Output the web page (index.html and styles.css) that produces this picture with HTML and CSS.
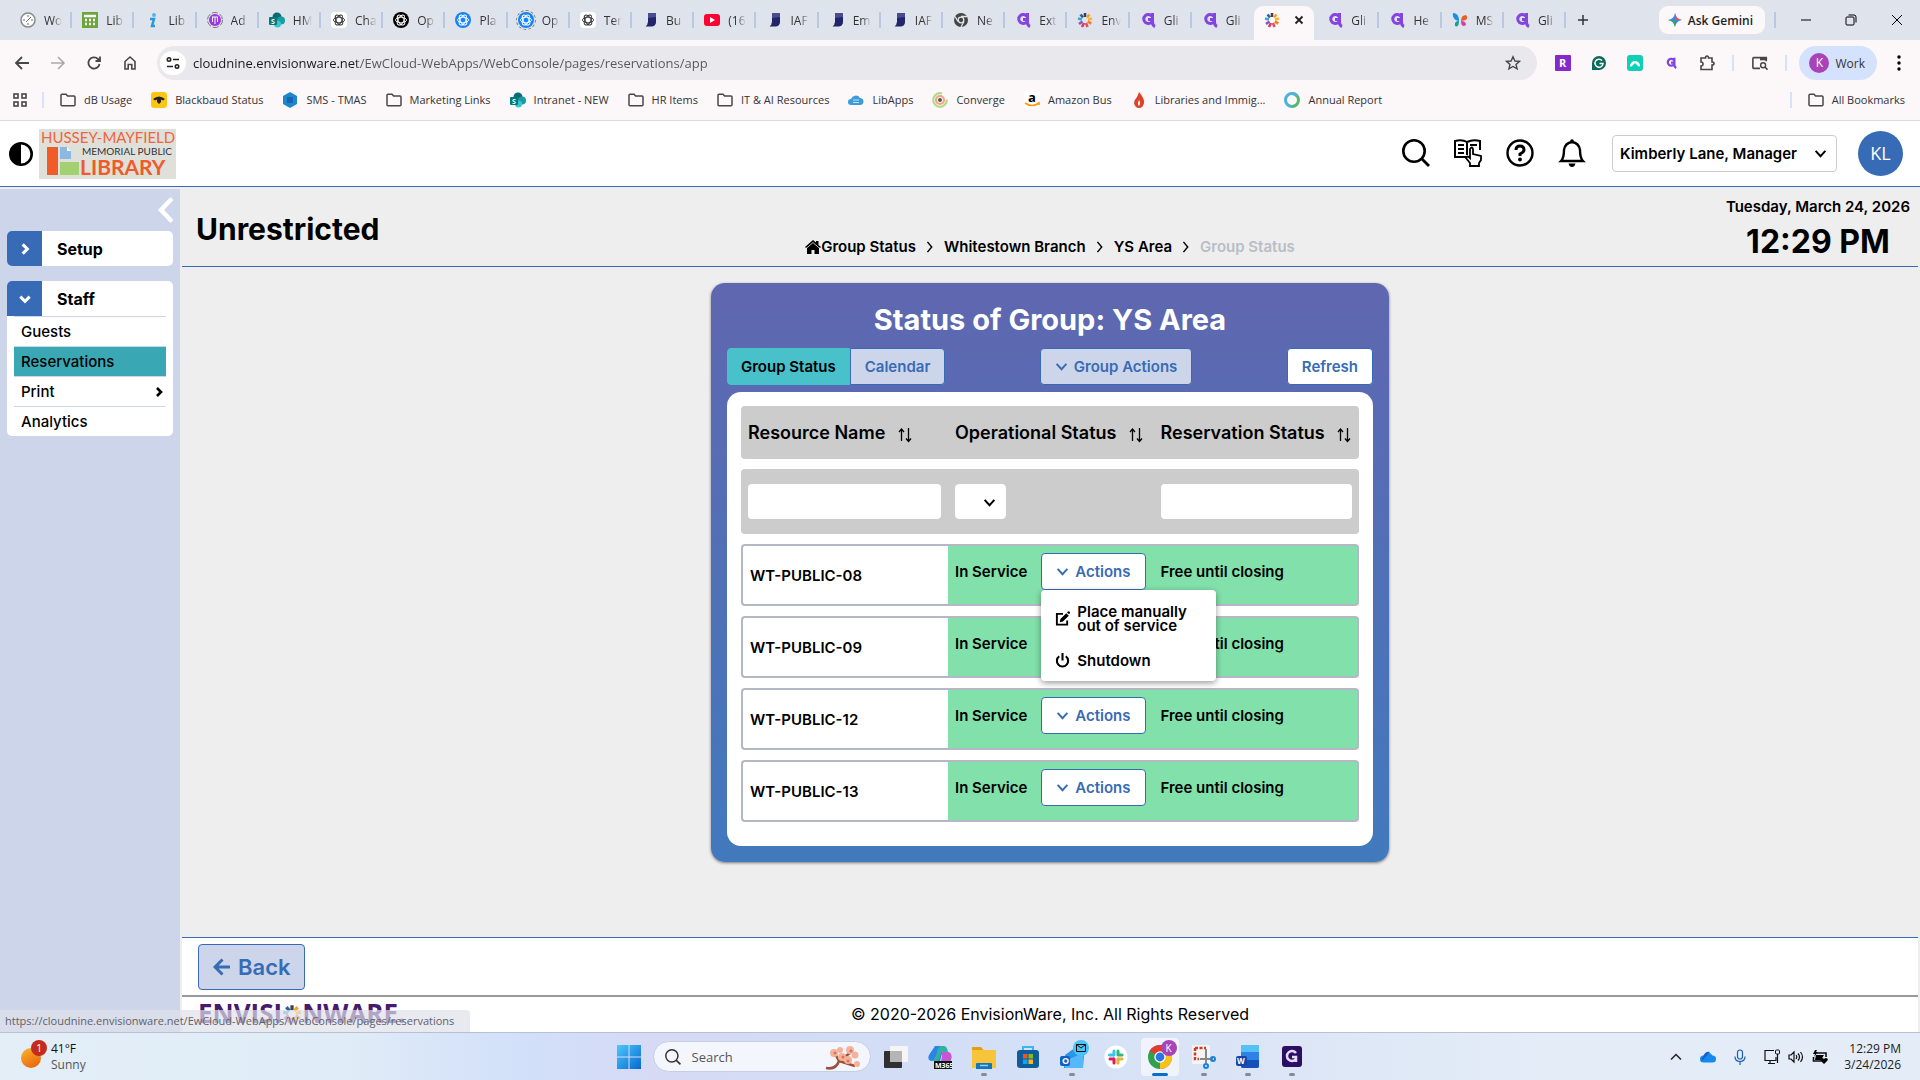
FILE: index.html
```html
<!DOCTYPE html>
<html lang="en">
<head>
    <meta charset="UTF-8">
    <meta name="viewport" content="width=device-width, initial-scale=1.0">
    <title>Group Status</title>
    <link rel="stylesheet" href="styles.css">
</head>
<body>
    <!-- Shared icons -->
    <svg class="sprite" aria-hidden="true">
        <symbol id="folder" viewBox="0 0 16 16"><path d="M1 3.2q0-1 1-1h4l1.6 1.8H14q1 0 1 1v7.8q0 1-1 1H2q-1 0-1-1z" fill="none" stroke="#474747" stroke-width="1.5"/></symbol>
        <symbol id="chevron" viewBox="0 0 12 12"><path d="M1.500 3.500 6 8.500l4.500-5" fill="none" stroke="currentColor" stroke-width="1.800"/></symbol>
        <symbol id="angle" viewBox="0 0 12 12"><path d="M4 2l4 4-4 4" fill="none" stroke="currentColor" stroke-width="2.600"/></symbol>
        <symbol id="sort" viewBox="0 0 14 16"><path d="M3.500 14V2M1 5l2.500-3L6 5M10.500 1v13M8 11.500l2.500 3 2.500-3" fill="none" stroke="#000" stroke-width="1.300"/></symbol>
        <symbol id="g-icon" viewBox="0 0 16 16"><path d="M12 4.500A4.500 4.500 0 1 0 12 9.500V7.500H8M12.500 1v9q0 3.500 2.500 4.500" fill="none" stroke="#8344e0" stroke-width="3"/></symbol>
        <symbol id="book-icon" viewBox="0 0 16 16"><path d="M6 1h8v8q0 5-4 5H4q2-1 2-4z" fill="#4a4c92"/><path d="M6 6l8-1v4q0 5-4 5.500H3.500Q6 13 6 10z" fill="#22256a"/></symbol>
        <symbol id="gpt-icon" viewBox="0 0 16 16"><g fill="none" stroke="currentColor" stroke-width="0.900"><ellipse cx="8" cy="8" rx="5.500" ry="2.800"/><ellipse cx="8" cy="8" rx="5.500" ry="2.800" transform="rotate(60 8 8)"/><ellipse cx="8" cy="8" rx="5.500" ry="2.800" transform="rotate(120 8 8)"/></g></symbol>
        <symbol id="sharepoint" viewBox="0 0 16 16"><circle cx="8" cy="5" r="4.500" fill="#036c70"/><circle cx="12" cy="8.500" r="4" fill="#1a9ba1"/><circle cx="8.500" cy="12" r="3.500" fill="#37c6d0"/><rect y="5" width="8" height="8" rx="1" fill="#03787c"/><text x="2" y="11.500" font-size="7" font-weight="700" fill="#fff">S</text></symbol>
        <symbol id="burst" viewBox="0 0 16 16"><g fill="none" stroke-width="2.600"><path d="M8 5V1" stroke="#443a5e"/><path d="M10 5.500l2.500-3" stroke="#f5a31c"/><path d="M11 7.500l4-1" stroke="#f7b733"/><path d="M10.800 9.500l3.500 2" stroke="#f08030"/><path d="M9 11l1.500 4" stroke="#e84e4e"/><path d="M7 11l-2 4" stroke="#d43a78"/><path d="M5.500 9.500L2 12" stroke="#8f52b5"/><path d="M5 7.500L1 6.500" stroke="#3ba5d6"/><path d="M6 5.500L3.500 2.500" stroke="#28658e"/></g></symbol>
        <symbol id="search" viewBox="0 0 28 28"><circle cx="12" cy="12" r="10.700" fill="none" stroke="currentColor" stroke-width="2.600"/><path d="M19.500 19.500l7.500 7.500" stroke="currentColor" stroke-width="2.800"/></symbol>
    </svg>

    <!-- Browser window -->
    <header class="browser">
        <div class="tab-strip">
            <nav class="tabs">
                <button class="tab"><svg viewBox="0 0 16 16"><circle cx="8" cy="8" r="7" fill="#fff" stroke="#888" stroke-width="1.500"/><path d="M8 3v2M8 13v-2M3 8h2M13 8h-2M6 10l5-5" stroke="#666"/></svg><span>Wo</span></button>
                <button class="tab"><svg viewBox="0 0 16 16"><rect width="16" height="16" fill="#6aa63b"/><path d="M2 4h12M3 8h2m2 0h2m2 0h2M3 12h2m2 0h2m2 0h2" stroke="#fff" stroke-width="2.500"/></svg><span>Lib</span></button>
                <button class="tab"><svg viewBox="0 0 16 16"><circle cx="10" cy="3" r="2" fill="#55b7e8"/><path d="M6 7h4l-2 7h3" fill="none" stroke="#269bdb" stroke-width="2.500"/></svg><span>Lib</span></button>
                <button class="tab"><svg viewBox="0 0 16 16"><circle cx="8" cy="8" r="7.500" fill="none" stroke="#777" stroke-dasharray="6 2"/><circle cx="8" cy="8" r="6" fill="#9d35e0"/><path d="M5 5h6M8 5v7M5.500 5v5M10.500 5v5" stroke="#fff"/></svg><span>Ad</span></button>
                <button class="tab"><svg><use href="#sharepoint"/></svg><span>HM</span></button>
                <button class="tab"><svg class="gpt gpt-white"><use href="#gpt-icon"/></svg><span>Cha</span></button>
                <button class="tab"><svg class="gpt gpt-black"><use href="#gpt-icon"/></svg><span>Op</span></button>
                <button class="tab"><svg class="gpt gpt-blue"><use href="#gpt-icon"/></svg><span>Pla</span></button>
                <button class="tab"><svg class="gpt gpt-blue gpt-ring"><use href="#gpt-icon"/></svg><span>Op</span></button>
                <button class="tab"><svg class="gpt gpt-white"><use href="#gpt-icon"/></svg><span>Ter</span></button>
                <button class="tab"><svg><use href="#book-icon"/></svg><span>Bu</span></button>
                <button class="tab"><svg viewBox="0 0 16 16"><rect y="2" width="16" height="12" rx="3" fill="#f03"/><path d="M6 5l5 3-5 3z" fill="#fff"/></svg><span>(16</span></button>
                <button class="tab"><svg><use href="#book-icon"/></svg><span>IAF</span></button>
                <button class="tab"><svg><use href="#book-icon"/></svg><span>Em</span></button>
                <button class="tab"><svg><use href="#book-icon"/></svg><span>IAF</span></button>
                <button class="tab"><svg viewBox="0 0 16 16"><circle cx="8" cy="8" r="7" fill="#444"/><circle cx="8" cy="8" r="2.800" fill="#444" stroke="#dfe3ec" stroke-width="1.300"/><path d="M8 4.500h6.500M5 9.500L2 4.500M11 9.500l-3 5.500" stroke="#dfe3ec" stroke-width="1.300"/></svg><span>Ne</span></button>
                <button class="tab"><svg><use href="#g-icon"/></svg><span>Ext</span></button>
                <button class="tab"><svg><use href="#burst"/></svg><span>Env</span></button>
                <button class="tab"><svg><use href="#g-icon"/></svg><span>Gli</span></button>
                <button class="tab"><svg><use href="#g-icon"/></svg><span>Gli</span></button>
                <button class="tab active" aria-label="Group Status"><svg><use href="#burst"/></svg><svg class="close" viewBox="0 0 10 10"><path d="M1.500 1.500l7 7M8.500 1.500l-7 7" stroke="#1f1f1f" stroke-width="1.800"/></svg></button>
                <button class="tab"><svg><use href="#g-icon"/></svg><span>Gli</span></button>
                <button class="tab"><svg><use href="#g-icon"/></svg><span>He</span></button>
                <button class="tab"><svg viewBox="0 0 16 16"><path d="M7 9C3 9 0 5 1 1q6 0 6 8z" fill="#1691e8"/><path d="M7 9q-5 0-4 5 4 2 4-5z" fill="#1ba08a"/><path d="M9 9q0-6 5-6 4 5-5 6z" fill="#f05a28"/><path d="M9 9q5 0 5 4-5 3-5-4z" fill="#d83ca8"/></svg><span>MS</span></button>
                <button class="tab"><svg><use href="#g-icon"/></svg><span>Gli</span></button>
            </nav>
            <button class="new-tab" aria-label="New tab"><svg viewBox="0 0 12 12"><path d="M6 1v10M1 6h10" stroke="#333" stroke-width="1.500"/></svg></button>
            <div class="window-tools">
                <button class="gemini"><svg viewBox="0 0 14 14"><path d="M7 0q1 6 7 7-6 1-7 7-1-6-7-7 6-1 7-7z" fill="#3b82f6"/><path d="M7 0q1 6 7 7H7z" fill="#e8544a"/><path d="M0 7h7v7q-1-6-7-7z" fill="#35a566"/></svg>Ask Gemini</button>
                <button class="win-btn divided" aria-label="Minimize"><svg viewBox="0 0 12 12"><path d="M1 6h10" stroke="#000"/></svg></button>
                <button class="win-btn" aria-label="Restore"><svg viewBox="0 0 12 12"><rect x="1" y="3" width="8" height="8" rx="1" fill="none" stroke="#000"/><path d="M3.500 1H9q2 0 2 2v5.500" fill="none" stroke="#000"/></svg></button>
                <button class="win-btn" aria-label="Close"><svg viewBox="0 0 12 12"><path d="M1 1l10 10M11 1L1 11" stroke="#000"/></svg></button>
            </div>
        </div>

        <div class="toolbar">
            <div class="nav-buttons">
                <button aria-label="Back"><svg viewBox="0 0 16 16"><path d="M15 8H2.500M8 2L2 8l6 6" fill="none" stroke="#474747" stroke-width="1.800"/></svg></button>
                <button aria-label="Forward"><svg viewBox="0 0 16 16"><path d="M1 8h12.500M8 2l6 6-6 6" fill="none" stroke="#aaa" stroke-width="1.600"/></svg></button>
                <button aria-label="Reload"><svg viewBox="0 0 16 16"><path d="M13.500 9A5.600 5.600 0 1 1 12 4l2 2M14 1.500V6H9.500" fill="none" stroke="#474747" stroke-width="1.800"/></svg></button>
                <button aria-label="Home"><svg viewBox="0 0 16 16"><path d="M3 6.500L8 2l5 4.500V14H9.800V9.500H6.200V14H3z" fill="none" stroke="#474747" stroke-width="1.600"/></svg></button>
            </div>
            <div class="address">
                <button class="site-info" aria-label="Site information"><svg viewBox="0 0 14 14"><g fill="none" stroke="#222" stroke-width="1.600"><circle cx="3" cy="3.500" r="1.700"/><circle cx="11" cy="10.500" r="1.700"/><path d="M7 3.500h6M1 10.500h6"/></g></svg></button>
                <input type="text" class="url" aria-label="Address" value="cloudnine.envisionware.net/EwCloud-WebApps/WebConsole/pages/reservations/app">
                <button class="star" aria-label="Bookmark"><svg viewBox="0 0 16 16"><path d="M8 1.800l1.900 4.200 4.600.4-3.500 3 1.100 4.500L8 11.500l-4.100 2.400L5 9.400l-3.500-3L6.100 6z" fill="none" stroke="#474747" stroke-width="1.400"/></svg></button>
            </div>
            <div class="extensions">
                <button aria-label="R extension"><svg viewBox="0 0 16 16"><rect width="16" height="16" rx="1" fill="#8529cd"/><text x="4" y="12" font-size="11" font-weight="700" fill="#fff">R</text></svg></button>
                <button aria-label="Grammar"><svg viewBox="0 0 16 16"><path d="M1 15V8a7 7 0 1 1 7 7z" fill="#0b6b5a"/><path d="M11 5.500A4 4 0 1 0 12 8.500H8.500" fill="none" stroke="#fff" stroke-width="1.500"/></svg></button>
                <button aria-label="VPN"><svg viewBox="0 0 16 16"><rect width="16" height="16" rx="3" fill="#0fcfb6"/><path d="M3 11a5 5 0 1 1 10 0q-1 1-2 0L8 8l-3 3q-1 1-2 0z" fill="#fff"/></svg></button>
                <button aria-label="G extension"><svg class="small"><use href="#g-icon"/></svg></button>
                <button aria-label="Extensions"><svg viewBox="0 0 16 16"><path d="M2 3h4.500q0-2 1.500-2t1.500 2H13v4q2 0 2 1.500T13 10v4.500H2V11q2 0 2-2T2 7z" fill="none" stroke="#474747" stroke-width="1.600"/></svg></button>
                <button class="divided" aria-label="Side search"><svg viewBox="0 0 18 16"><path d="M9 14H2q-1 0-1-1V3q0-1 1-1h14v4" fill="none" stroke="#474747" stroke-width="1.800"/><path d="M9 2h8v3H9z" fill="#474747"/><circle cx="12.500" cy="10.500" r="2.800" fill="none" stroke="#474747" stroke-width="1.600"/><path d="M14.500 12.500l3 3" stroke="#474747" stroke-width="1.800"/></svg></button>
            </div>
            <button class="profile"><span>K</span>Work</button>
            <button class="dots" aria-label="Menu"><svg viewBox="0 0 4 16"><circle cx="2" cy="2" r="1.700"/><circle cx="2" cy="8" r="1.700"/><circle cx="2" cy="14" r="1.700"/></svg></button>
        </div>

        <nav class="bookmarks">
            <button class="apps" aria-label="Apps"><svg viewBox="0 0 14 14"><g fill="none" stroke="#474747" stroke-width="1.600"><rect x="1" y="1" width="4" height="4"/><rect x="9" y="1" width="4" height="4"/><rect x="1" y="9" width="4" height="4"/><rect x="9" y="9" width="4" height="4"/></g></svg></button>
            <a href="#"><svg><use href="#folder"/></svg>dB Usage</a>
            <a href="#"><svg viewBox="0 0 16 16"><rect width="16" height="16" rx="3" fill="#ffc515"/><path d="M2 7q6-5 12 0l-2 1.500-2-1V10l-2 2-2-2V7.500l-2 1z" fill="#222"/></svg>Blackbaud Status</a>
            <a href="#"><svg viewBox="0 0 16 16"><path d="M8 0l7 4v8l-7 4-7-4V4z" fill="#1d86cf"/><path d="M5 5h6v6H5z" fill="#1565b0"/></svg>SMS - TMAS</a>
            <a href="#"><svg><use href="#folder"/></svg>Marketing Links</a>
            <a href="#"><svg><use href="#sharepoint"/></svg>Intranet - NEW</a>
            <a href="#"><svg><use href="#folder"/></svg>HR Items</a>
            <a href="#"><svg><use href="#folder"/></svg>IT &amp; AI Resources</a>
            <a href="#"><svg viewBox="0 0 16 16"><path d="M3 13a3 3 0 0 1 0-6 5 5 0 0 1 9-1 3.600 3.600 0 0 1 1 7z" fill="#3c9bd8"/><path d="M5 8h6M5 10.500h6" stroke="#bfe1f5"/></svg>LibApps</a>
            <a href="#"><svg viewBox="0 0 16 16"><circle cx="8" cy="8" r="6.800" fill="none" stroke="#b5d98b" stroke-width="2.200" stroke-dasharray="34 8"/><circle cx="8" cy="8" r="4" fill="none" stroke="#f3a27e" stroke-width="2"/><circle cx="8" cy="8" r="2" fill="#555"/></svg>Converge</a>
            <a href="#"><svg viewBox="0 0 16 16"><rect width="16" height="16" fill="#fff"/><text x="4" y="10" font-size="13" font-weight="700">a</text><path d="M1 11q7 5 14 0v2" fill="none" stroke="#f90" stroke-width="1.600"/></svg>Amazon Bus</a>
            <a href="#"><svg viewBox="0 0 16 16"><path d="M8 0q6 7 5 11-1 5-5 5t-5-5q0-3 3-6 1-2 2-5z" fill="#dc4427"/><path d="M8 8q2 3 0 6-2-2 0-6z" fill="#fff"/></svg>Libraries and Immig...</a>
            <a href="#"><svg viewBox="0 0 16 16"><path d="M8 1.500a6.500 6.500 0 0 0 0 13" fill="none" stroke="#4db2de" stroke-width="3"/><path d="M8 1.500a6.500 6.500 0 0 1 0 13" fill="none" stroke="#54b86a" stroke-width="3"/><path d="M8 1.500a6.500 6.500 0 0 1 5 2.500" fill="none" stroke="#4db2de" stroke-width="3"/></svg>Annual Report</a>
            <a href="#" class="all-bookmarks"><svg><use href="#folder"/></svg>All Bookmarks</a>
        </nav>
    </header>

    <!-- Application header -->
    <header class="app-header">
        <button class="contrast" aria-label="Toggle contrast"><svg viewBox="0 0 24 24"><circle cx="12" cy="12" r="10.700" fill="#fff" stroke="#000" stroke-width="2.600"/><path d="M12 1a11 11 0 0 0 0 22z"/></svg></button>
        <div class="library-logo">
            <svg viewBox="0 0 137 50">
                <rect width="137" height="50" fill="#dfe0da"/>
                <text x="2" y="14" font-size="15" fill="#f0653a">HUSSEY-MAYFIELD</text>
                <text x="43" y="26" font-size="10" fill="#333">MEMORIAL PUBLIC</text>
                <text x="41" y="46" font-size="21" font-weight="700" fill="#f15a29">LIBRARY</text>
                <rect x="8" y="18" width="11" height="28" fill="#f15a29"/>
                <path d="M21 18h7l4 4v8H21z" fill="#8db8e2"/><path d="M28 18v4h4z" fill="#fff"/>
                <rect x="21" y="33" width="19" height="13" fill="#a3d071"/>
            </svg>
        </div>
        <div class="header-tools">
            <button aria-label="Search"><svg viewBox="0 0 28 28"><use href="#search"/></svg></button>
            <button aria-label="Guide"><svg viewBox="0 0 28 28"><g fill="none" stroke="#000" stroke-width="2"><path d="M15 18H1V2q7-2 12 1 6-3 13-1v9M13 3v13M4 6h6M4 10h6M4 14h6M16 6h7M16 10h2"/></g><path d="M16 24l-4-5q1-3 4 0V10q2-3 3 0v5l8 2v4l-2 3v3h-9z" fill="#fff" stroke="#000" stroke-width="1.800"/></svg></button>
            <button aria-label="Help"><svg viewBox="0 0 28 28"><circle cx="14" cy="14" r="12.500" fill="none" stroke="#000" stroke-width="2.400"/><path d="M10 11q0-4 4-4t4 4q0 2-4 4v2" fill="none" stroke="#000" stroke-width="3"/><circle cx="14" cy="20.500" r="1.900"/></svg></button>
            <button aria-label="Notifications"><svg viewBox="0 0 28 28"><path d="M3 22q3-3 3-11 1-7 8-8 7 1 8 8 0 8 3 11z" fill="none" stroke="#000" stroke-width="2.400"/><circle cx="14" cy="2" r="1.800"/><path d="M10.500 24.500h7q-1 3.500-3.500 3.500t-3.500-3.500z"/></svg></button>
        </div>
        <div class="select-box user-select">
            <select aria-label="User"><option>Kimberly Lane, Manager</option></select>
            <svg><use href="#chevron"/></svg>
        </div>
        <div class="avatar">KL</div>
    </header>

    <div class="app">
        <!-- Side menu -->
        <aside class="sidebar">
            <button class="collapse" aria-label="Collapse menu"><svg viewBox="0 0 16 26"><path d="M13.500 3L4 13l9.500 10" fill="none" stroke="#fff" stroke-width="4.500" stroke-linecap="round"/></svg></button>
            <div class="menu-group">
                <button class="menu-title"><span class="menu-icon"><svg><use href="#angle"/></svg></span>Setup</button>
            </div>
            <div class="menu-group">
                <button class="menu-title"><span class="menu-icon open"><svg><use href="#angle"/></svg></span>Staff</button>
                <ul class="menu-list">
                    <li><a href="#">Guests</a></li>
                    <li><a href="#" class="selected">Reservations</a></li>
                    <li><a href="#">Print<svg><use href="#angle"/></svg></a></li>
                    <li><a href="#">Analytics</a></li>
                </ul>
            </div>
        </aside>

        <main class="main">
            <div class="page-head">
                <h1>Unrestricted</h1>
                <nav class="breadcrumb">
                    <a href="#"><svg class="home" viewBox="0 0 16 14"><path d="M0 7l8-7 3 2.600V1h2.500v4L16 7l-1 1-1-.8V14H9.500v-4h-3v4H2V7.200L1 8z"/><path d="M1.500 8.200L8 2.600l6.500 5.600" fill="none" stroke="#eee" stroke-width="0.800"/></svg>Group Status</a>
                    <svg class="sep" viewBox="0 0 8 14"><path d="M1 1l5 6-5 6" fill="none" stroke="#000" stroke-width="1.700"/></svg>
                    <a href="#">Whitestown Branch</a>
                    <svg class="sep" viewBox="0 0 8 14"><path d="M1 1l5 6-5 6" fill="none" stroke="#000" stroke-width="1.700"/></svg>
                    <a href="#">YS Area</a>
                    <svg class="sep" viewBox="0 0 8 14"><path d="M1 1l5 6-5 6" fill="none" stroke="#000" stroke-width="1.700"/></svg>
                    <span>Group Status</span>
                </nav>
                <div class="clock">
                    <div class="date">Tuesday, March 24, 2026</div>
                    <div class="time">12:29 PM</div>
                </div>
            </div>

            <div class="content">
                <section class="card">
                    <h2>Status of Group: YS Area</h2>
                    <div class="card-tools">
                        <div class="switch">
                            <button class="btn btn-on">Group Status</button>
                            <button class="btn btn-light">Calendar</button>
                        </div>
                        <button class="btn btn-light"><svg><use href="#chevron"/></svg>Group Actions</button>
                        <button class="btn btn-white">Refresh</button>
                    </div>
                    <div class="table-box">
                        <table class="status-table">
                            <thead>
                                <tr class="head-row">
                                    <th>Resource Name <svg><use href="#sort"/></svg></th>
                                    <th>Operational Status <svg><use href="#sort"/></svg></th>
                                    <th>Reservation Status <svg><use href="#sort"/></svg></th>
                                </tr>
                                <tr class="filter-row">
                                    <td><input type="text" aria-label="Resource name"></td>
                                    <td>
                                        <div class="select-box filter-select">
                                            <select aria-label="Operational status"><option></option></select>
                                            <svg><use href="#chevron"/></svg>
                                        </div>
                                    </td>
                                    <td><input type="text" aria-label="Reservation status"></td>
                                </tr>
                            </thead>
                            <tbody>
                                <tr>
                                    <td>WT-PUBLIC-08</td>
                                    <td>
                                        <div class="status">In Service
                                            <div class="dropdown">
                                                <button class="btn btn-white"><svg><use href="#chevron"/></svg>Actions</button>
                                                <div class="dropdown-menu">
                                                    <button><svg viewBox="0 0 16 16"><path d="M8.500 3H2v11.500h11V10" fill="none" stroke="#000" stroke-width="2"/><path d="M5 12l.8-3.500L12 2.300l2.700 2.700L8.500 11.200zM12.800 1.500l1-1q.7-.5 1.400 0l.6.600q.500.700 0 1.400l-1 1z"/></svg><span>Place manually out of service</span></button>
                                                    <button><svg viewBox="0 0 16 16"><path d="M4.500 3.500a6 6 0 1 0 7 0M8 0v8" fill="none" stroke="#000" stroke-width="2.200"/></svg><span>Shutdown</span></button>
                                                </div>
                                            </div>
                                        </div>
                                    </td>
                                    <td>Free until closing</td>
                                </tr>
                                <tr>
                                    <td>WT-PUBLIC-09</td>
                                    <td><div class="status">In Service <button class="btn btn-white"><svg><use href="#chevron"/></svg>Actions</button></div></td>
                                    <td>Free until closing</td>
                                </tr>
                                <tr>
                                    <td>WT-PUBLIC-12</td>
                                    <td><div class="status">In Service <button class="btn btn-white"><svg><use href="#chevron"/></svg>Actions</button></div></td>
                                    <td>Free until closing</td>
                                </tr>
                                <tr>
                                    <td>WT-PUBLIC-13</td>
                                    <td><div class="status">In Service <button class="btn btn-white"><svg><use href="#chevron"/></svg>Actions</button></div></td>
                                    <td>Free until closing</td>
                                </tr>
                            </tbody>
                        </table>
                    </div>
                </section>
            </div>

            <div class="action-bar">
                <button class="back"><svg viewBox="0 0 18 18"><path d="M17 9H3M9.500 1.500L2 9l7.500 7.500" fill="none" stroke="currentColor" stroke-width="3"/></svg>Back</button>
            </div>
            <footer class="footer">
                <div class="ew-logo">ENVISI<svg><use href="#burst"/></svg>NWARE.</div>
                <p>© 2020-2026 EnvisionWare, Inc. All Rights Reserved</p>
            </footer>
        </main>
        <div class="link-hint">https://cloudnine.envisionware.net/EwCloud-WebApps/WebConsole/pages/reservations</div>
    </div>

    <!-- Taskbar -->
    <footer class="taskbar">
        <div class="weather">
            <svg viewBox="0 0 26 34"><defs><linearGradient id="sun" x2="0.500" y2="1"><stop stop-color="#f4b92c"/><stop offset="1" stop-color="#ee6a10"/></linearGradient></defs><circle cx="10" cy="18" r="10" fill="url(#sun)"/><circle cx="18" cy="8" r="8" fill="#c42b1c"/><text x="15" y="12" font-size="11" fill="#fff">1</text></svg>
            <div>41°F<br><span>Sunny</span></div>
        </div>
        <div class="task-icons">
            <button class="start" aria-label="Start"><svg viewBox="0 0 24 24"><defs><linearGradient id="win" x2="1" y2="1"><stop stop-color="#4cc8fb"/><stop offset="1" stop-color="#0669ce"/></linearGradient></defs><path d="M0 0h11.500v11.500H0zM12.500 0H24v11.500H12.500zM0 12.500h11.500V24H0zM12.500 12.500H24V24H12.500z" fill="url(#win)"/></svg></button>
            <label class="task-search">
                <svg viewBox="0 0 28 28"><use href="#search"/></svg>
                <input type="text" placeholder="Search" aria-label="Search">
                <svg class="blossom" viewBox="0 0 42 26"><path d="M4 24q10 2 13-7L28 9M17 17l16 5M17 17L12 8" fill="none" stroke="#9b5239" stroke-width="2.500"/><g fill="#f5b29a"><circle cx="12" cy="9" r="4"/><circle cx="18" cy="6" r="3"/><circle cx="20" cy="13" r="4"/><circle cx="28" cy="6" r="4"/><circle cx="33" cy="11" r="3.500"/><circle cx="26" cy="16" r="4"/><circle cx="35" cy="20" r="3"/></g><g fill="#e0705c"><circle cx="13" cy="9" r="1.500"/><circle cx="21" cy="13" r="1.500"/><circle cx="29" cy="7" r="1.500"/><circle cx="26" cy="17" r="1.500"/></g></svg>
            </label>
            <button class="task" aria-label="Task view"><svg viewBox="0 0 24 24"><rect x="0" y="6" width="18" height="17" rx="1" fill="#303030"/><rect x="6" y="1" width="18" height="16" rx="1" fill="#f5f5f5"/><path d="M6 6h12v11H6z" fill="#b5b5b5"/></svg></button>
            <button class="task" aria-label="M365"><svg viewBox="0 0 24 24"><path d="M7 1h9l-4 15H3q-4-1-2-6z" fill="#2c83e8"/><path d="M16 1q3 0 4 6h-5q-2 0-3 4l-2 5H3q5-2 6-9 1-5 4-6z" fill="#2fb3a0"/><path d="M14 7h7q4 2 2 8-1 4-5 4h-8q3-1 4-7z" fill="#c857d5"/><rect x="6" y="16" width="18" height="8" fill="#111"/><text x="7" y="23" font-size="7" font-weight="700" fill="#fff">M365</text></svg></button>
            <button class="task running" aria-label="Files"><svg viewBox="0 0 24 24"><path d="M0 2h9l3 3h12v18H0z" fill="#f8c43a"/><path d="M0 2h9l2 3H0z" fill="#e29c18"/><path d="M4 24v-5q0-1 1-1h14q1 0 1 1v5z" fill="#1076bd"/><path d="M8 20.500h8" stroke="#8fd1f7" stroke-width="1.500"/></svg></button>
            <button class="task" aria-label="Store"><svg viewBox="0 0 24 24"><path d="M7 6V2h10v4" fill="none" stroke="#39b8ef" stroke-width="2"/><rect x="1" y="5" width="22" height="18" rx="3" fill="#105b9c"/><path d="M7 9h4.500v4.500H7z" fill="#f05423"/><path d="M12.500 9H17v4.500h-4.500z" fill="#82bc1a"/><path d="M7 14.500h4.500V19H7z" fill="#13a5ec"/><path d="M12.500 14.500H17V19h-4.500z" fill="#fcb91d"/></svg></button>
            <button class="task running" aria-label="Outlook"><svg viewBox="0 0 24 24"><path d="M5 10L16 2l8 8-1 13H4z" fill="#2b95ea"/><path d="M5 16l18-8v15H5z" fill="#55b8f8"/><rect y="11" width="10" height="10" rx="2" fill="#1260bf"/><text x="2" y="19" font-size="9" font-weight="700" fill="#fff">O</text></svg><span class="badge mail"><svg viewBox="0 0 10 8"><path d="M.5.500h9v7h-9zL5 4l4.500-3.500" fill="none" stroke="#111"/></svg></span></button>
            <button class="task" aria-label="Slack"><svg viewBox="0 0 24 24"><circle cx="12" cy="12" r="11.500" fill="#fff"/><g stroke-width="3" stroke-linecap="round"><path d="M10 6v4" stroke="#36c5f0"/><path d="M5.500 10H9" stroke="#36c5f0"/><path d="M14 6v4M14.500 10H18" stroke="#2eb67d"/><path d="M10 14v4M6 14h3.500" stroke="#e01e5a"/><path d="M14 14v4M14.500 14H18" stroke="#ecb22e"/></g></svg></button>
            <button class="task running current" aria-label="Chrome"><svg viewBox="0 0 24 24"><circle cx="12" cy="12" r="12" fill="#2fa24f"/><path d="M12 12L1.600 6A12 12 0 0 1 22.400 6z" fill="#e33b2e"/><path d="M12 12l10.400-6A12 12 0 0 1 12 24z" fill="#fbc116"/><circle cx="12" cy="12" r="5.700" fill="#fff"/><circle cx="12" cy="12" r="4.400" fill="#2876e6"/></svg><span class="badge">K</span></button>
            <button class="task running" aria-label="Snip"><svg viewBox="0 0 24 24"><rect width="18" height="19" rx="1" fill="#f4f4f4"/><path d="M3 3h11M3 3v11h4" fill="none" stroke="#cf3d1d" stroke-width="2.500" stroke-dasharray="3 1.500"/><path d="M14 4v14M8 14h13" stroke="#888" stroke-width="2"/><circle cx="21" cy="14" r="2" fill="none" stroke="#1684d8" stroke-width="2"/><circle cx="14" cy="21" r="2" fill="none" stroke="#1684d8" stroke-width="2"/></svg></button>
            <button class="task running" aria-label="Word"><svg viewBox="0 0 24 24"><rect x="5" width="18" height="23" rx="2" fill="#2f80e8"/><path d="M5 2q0-2 2-2h14q2 0 2 2v5H5z" fill="#56c1f7"/><path d="M5 15h18v6q0 2-2 2H7q-2 0-2-2z" fill="#1450b8"/><rect y="11" width="11" height="10" rx="2" fill="#1247a8"/><text x="1" y="19" font-size="8" font-weight="700" fill="#fff">W</text></svg></button>
            <button class="task running" aria-label="G app"><svg viewBox="0 0 24 24"><rect x="2" y="1" width="20" height="21" rx="3" fill="#2c0e63"/><path d="M16 8a5 5 0 1 0 0 6v-2h-4M16 12v5" fill="none" stroke="#e6dbfb" stroke-width="2.500"/></svg></button>
        </div>
        <div class="tray">
            <svg viewBox="0 0 16 16"><path d="M3 10.500l5-5 5 5" fill="none" stroke="#222" stroke-width="1.500"/></svg>
            <svg viewBox="0 0 16 16"><path d="M3.500 13.500a3.500 3.500 0 0 1 0-7 5 5 0 0 1 9 0 3.500 3.500 0 0 1 0 7z" fill="#1489ee"/><path d="M3 8q-2 1-1 4L10 3Q5 2 3 8z" fill="#1b5fd0"/></svg>
            <svg viewBox="0 0 16 16"><rect x="5.500" y="1" width="5" height="9" rx="2.500" fill="none" stroke="#1b5fb0" stroke-width="1.200"/><path d="M3 7.500q0 5 5 5t5-5M8 12.500V16" fill="none" stroke="#1b5fb0" stroke-width="1.200"/></svg>
            <div class="system">
                <svg viewBox="0 0 16 16"><path d="M10 1.500H1v10h11V8M4 14.500h7M6 12v2" fill="none" stroke="#111" stroke-width="1.200"/><rect x="11.500" y="1" width="4" height="4" rx="1" fill="none" stroke="#111"/><path d="M13.500 5v9" stroke="#111" stroke-width="1.200"/></svg>
                <svg viewBox="0 0 16 16"><path d="M1 6v4h2l3 3V3L3 6zM8 6q1.500 2 0 4M10 4.500q3 3.500 0 7M12.500 3q4 5 0 10" fill="none" stroke="#111" stroke-width="1.200"/></svg>
                <svg viewBox="0 0 16 16"><path d="M5 4h9v4M1.500 8v4h8" fill="none" stroke="#111" stroke-width="1.600"/><path d="M4 6h8l-3 5H3z"/><path d="M12 15L8.500 11.500q-1-2 1.500-2.500 1 0 2 1 1-1 2-1 2.500.500 1.500 2.500zM3 1L1 5h2l-1 3 4-5H4l1-2z"/></svg>
            </div>
            <div class="tray-clock">12:29 PM<br>3/24/2026</div>
        </div>
    </footer>
</body>
</html>
```

FILE: styles.css
```css
/* General */
* {
    box-sizing: border-box;
}

body {
    margin: 0;
    min-height: 100vh;
    display: flex;
    flex-direction: column;
    background: #eee;
    color: #000;
    font-family: Inter, sans-serif;
    font-size: 15px;
    font-weight: 600;
}

button,
input,
select {
    font: inherit;
    color: inherit;
}

button {
    display: flex;
    align-items: center;
    padding: 0;
    border: none;
    background: none;
    cursor: pointer;
}

a {
    color: inherit;
    text-decoration: none;
}

svg {
    display: block;
    flex: none;
    width: 16px;
    height: 16px;
}

.sprite {
    position: absolute;
    width: 0;
    height: 0;
}

/* Browser window */
.browser,
.taskbar,
.link-hint {
    font-family: "Open Sans", sans-serif;
    font-size: 12px;
    font-weight: 400;
    color: #333;
}

.browser {
    background: #fcf7f9;
    border-bottom: 1px solid #dcdcde;
}

.tab-strip {
    display: flex;
    align-items: center;
    height: 40px;
    padding-left: 10px;
    background: #dfe3ec;
}

.tabs {
    display: flex;
    flex: 0 1 1556px;
    align-self: stretch;
    align-items: center;
    min-width: 0;
}

.tab {
    flex: 1 1 0;
    min-width: 0;
    gap: 8px;
    height: 16px;
    padding: 0 8px 0 10px;
    border-right: 2px solid #b9c7e2;
}

.tab span {
    flex: 1;
    white-space: nowrap;
    text-align: left;
    -webkit-mask-image: linear-gradient(90deg, #000 50%, transparent);
    mask-image: linear-gradient(90deg, #000 50%, transparent);
}

.tab:has(+ .active) {
    border-right-color: transparent;
}

.tab.active {
    align-self: flex-end;
    height: 34px;
    margin: 0 3px 0 0;
    padding: 0 8px 6px 10px;
    gap: 14px;
    border: none;
    border-radius: 9px 9px 0 0;
    background: #fcf7f9;
}

.close {
    width: 10px;
    height: 10px;
}

.gpt {
    border-radius: 50%;
    color: #333;
    background: #fff;
}

.gpt-white {
    border-radius: 4px;
}

.gpt-black {
    color: #fff;
    background: #000;
}

.gpt-blue {
    color: #fff;
    background: #1684f8;
}

.gpt-ring {
    outline: 1px dashed #777;
    outline-offset: 1px;
}

.new-tab {
    padding: 0 11px;
}

.new-tab svg,
.win-btn svg {
    width: 12px;
    height: 12px;
}

.window-tools {
    display: flex;
    align-items: center;
    margin-left: auto;
}

.gemini {
    gap: 6px;
    height: 28px;
    margin-right: 9px;
    padding: 0 12px 0 9px;
    border-radius: 9px;
    background: #fcf7f9;
    color: #1f1f1f;
    font-weight: 600;
}

.gemini svg {
    width: 14px;
    height: 14px;
}

.win-btn {
    justify-content: center;
    width: 46px;
    height: 16px;
}

.divided {
    border-left: 2px solid #b9c7e2;
}

.win-btn.divided {
    width: 54px;
    padding-left: 8px;
}

.toolbar {
    display: flex;
    align-items: center;
    height: 46px;
    padding: 0 19px 0 14px;
}

.nav-buttons {
    display: flex;
    gap: 20px;
    margin-right: 19px;
}

.address {
    display: flex;
    flex: 1;
    align-items: center;
    height: 34px;
    padding: 0 16px 0 3px;
    border-radius: 17px;
    background: #e9e8ed;
}

.site-info {
    justify-content: center;
    width: 26px;
    height: 24px;
    margin-right: 7px;
    border-radius: 12px;
    background: #fff;
}

.site-info svg {
    width: 14px;
    height: 14px;
}

.url {
    flex: 1;
    padding: 0;
    border: none;
    outline: none;
    color: #333;
    font-size: 13px;
    /* host is darker than the path */
    background: linear-gradient(90deg, #1a1a1a 164px, #54565b 164px);
    -webkit-background-clip: text;
    background-clip: text;
    -webkit-text-fill-color: transparent;
}

.extensions {
    display: flex;
    align-items: center;
    gap: 20px;
    margin: 0 16px 0 18px;
    padding-right: 17px;
    border-right: 2px solid #d5e2fb;
}

.extensions .divided {
    margin-left: -3px;
    padding-left: 18px;
    border-color: #d5e2fb;
}

.small {
    width: 12px;
    height: 16px;
    margin: 0 2px;
}

.profile {
    gap: 6px;
    height: 34px;
    margin-left: -4px;
    padding: 0 12px 0 10px;
    border-radius: 17px;
    background: #d5e2fd;
}

.profile span {
    width: 20px;
    height: 20px;
    border-radius: 50%;
    background: #a844b8;
    color: #fff;
    line-height: 20px;
}

.dots {
    margin-left: 20px;
}

.dots svg {
    width: 4px;
}

.bookmarks {
    display: flex;
    align-items: center;
    gap: 19px;
    height: 34px;
    padding: 0 15px 7px 13px;
    font-size: 11px;
}

.bookmarks a {
    display: flex;
    align-items: center;
    gap: 8px;
    white-space: nowrap;
}

.apps {
    height: 16px;
    margin-right: -3px;
    padding-right: 15px;
    border-right: 2px solid #d5e2fb;
}

.apps svg {
    width: 14px;
    height: 14px;
}

.bookmarks .all-bookmarks {
    height: 16px;
    margin-left: auto;
    padding-left: 16px;
    border-left: 2px solid #d5e2fb;
}

/* Application header */
.app-header {
    display: flex;
    align-items: center;
    height: 66px;
    padding: 0 17px 0 9px;
    background: #fff;
    border-bottom: 1px solid #386bb5;
}

.contrast svg {
    width: 24px;
    height: 24px;
}

.library-logo svg {
    width: 137px;
    height: 50px;
    margin-left: 6px;
    font-family: Lato, sans-serif;
    font-weight: 400;
}

.header-tools {
    display: flex;
    gap: 24px;
    margin-left: auto;
    padding-bottom: 2px;
}

.header-tools svg {
    width: 28px;
    height: 28px;
}

.select-box {
    position: relative;
}

.select-box select {
    width: 100%;
    border: 1px solid #ccc;
    border-radius: 4px;
    background: #fff;
    appearance: none;
}

.select-box svg {
    position: absolute;
    top: 12px;
    right: 10px;
    width: 13px;
    height: 13px;
    pointer-events: none;
}

.user-select {
    width: 225px;
    margin: 0 21px 0 26px;
}

.user-select select {
    height: 37px;
    padding: 0 7px;
}

.avatar {
    width: 45px;
    height: 45px;
    border-radius: 50%;
    background: #386bb5;
    color: #fff;
    font-family: "Open Sans", sans-serif;
    font-size: 18px;
    font-weight: 400;
    line-height: 45px;
    text-align: center;
}

/* Side menu */
.app {
    position: relative;
    display: flex;
    flex: 1;
}

.sidebar {
    display: flex;
    flex: none;
    flex-direction: column;
    gap: 15px;
    width: 180px;
    margin-top: 2px;
    padding: 8px 7px;
    background: #ccd5e9;
}

.collapse {
    align-self: flex-end;
    margin-bottom: -7px;
}

.collapse svg {
    width: 16px;
    height: 26px;
}

.menu-group {
    border-radius: 5px;
    background: #fff;
    overflow: hidden;
}

.menu-title {
    width: 100%;
    gap: 15px;
    height: 35px;
    font-size: 16px;
    font-weight: 700;
    line-height: 38px;
}

.menu-icon {
    display: grid;
    place-items: center;
    width: 35px;
    height: 35px;
    background: #386bb5;
    color: #fff;
}

.menu-icon svg {
    width: 14px;
    height: 14px;
}

.open svg {
    transform: rotate(90deg);
}

.menu-list {
    margin: 0;
    padding: 0 7px;
    list-style: none;
    font-size: 15px;
    font-weight: 500;
}

.menu-list li {
    border-top: 1px solid #ccd5e9;
}

.menu-list a {
    display: flex;
    align-items: center;
    justify-content: space-between;
    height: 29px;
    padding: 0 1px 0 7px;
}

.menu-list svg {
    width: 12px;
    height: 12px;
}

.menu-list .selected {
    background: #3aa8b4;
}

/* Page */
.main {
    display: flex;
    flex: 1;
    flex-direction: column;
    padding: 0 2px;
}

.page-head {
    display: grid;
    grid-template-columns: 1fr auto 1fr;
    height: 80px;
    padding: 0 8px;
    border-bottom: 1px solid #386bb5;
}

h1 {
    align-self: center;
    margin: 0;
    padding: 2px 0 0 6px;
    font-size: 30px;
    font-weight: 700;
}

.breadcrumb {
    display: flex;
    align-items: center;
    align-self: end;
    gap: 10px;
    padding-bottom: 12px;
}

.breadcrumb a {
    display: flex;
    align-items: center;
}

.breadcrumb span {
    color: #b9bdc6;
}

.home {
    height: 14px;
}

.sep {
    width: 8px;
    height: 12px;
}

.clock {
    justify-self: end;
    padding-top: 11px;
    text-align: center;
}

.date {
    line-height: 18px;
}

.time {
    font-size: 32px;
    font-weight: 700;
    line-height: 52px;
}

.content {
    display: flex;
    flex: 1;
    justify-content: center;
    align-items: flex-start;
    padding: 16px 0;
}

.card {
    width: 678px;
    padding: 16px;
    border-radius: 14px;
    background: linear-gradient(#5f67b0, #4279bd);
    box-shadow: 0 1px 3px rgba(0, 0, 0, 0.5);
}

h2 {
    margin: 0 0 6px;
    color: #fff;
    font-size: 29px;
    font-weight: 700;
    line-height: 42px;
    text-align: center;
}

.card-tools {
    display: flex;
    align-items: center;
    justify-content: space-between;
    height: 38px;
    margin-bottom: 7px;
}

.switch {
    display: flex;
    align-items: center;
}

.btn {
    gap: 6px;
    height: 37px;
    padding: 0 14px;
    border: 1px solid #386bb5;
    border-radius: 4px;
    color: #386bb5;
}

.btn svg {
    width: 13px;
    height: 13px;
}

.btn-light {
    background: #ccd5e9;
}

.btn-white {
    background: #fff;
}

.btn-on {
    padding: 0 13px;
    border-color: #48c1cb;
    border-radius: 4px 0 0 4px;
    background: #48c1cb;
    color: #000;
}

.btn-on + .btn {
    border-radius: 0 4px 4px 0;
}

/* Status table */
.table-box {
    padding: 4px 14px 14px;
    border-radius: 14px;
    background: #fff;
}

.status-table {
    width: 100%;
    table-layout: fixed;
    border-spacing: 0 10px;
}

.status-table th,
.status-table td {
    padding: 0 7px;
    text-align: left;
    white-space: nowrap;
}

.status-table tr > :first-child {
    width: 207px;
    border-radius: 4px 0 0 4px;
}

.status-table tr > :last-child {
    border-radius: 0 4px 4px 0;
}

.head-row th {
    height: 53px;
    background: #ccc;
    font-size: 18px;
    font-weight: 600;
}

.head-row svg {
    display: inline-block;
    width: 14px;
    margin-left: 8px;
    vertical-align: -4px;
}

.filter-row td {
    height: 65px;
    background: #ccc;
}

.filter-row input {
    display: block;
    width: 100%;
    height: 35px;
    border: none;
    border-radius: 4px;
    background: #fff;
}

.filter-select {
    width: 51px;
}

.filter-select select {
    height: 35px;
    border-color: #fff;
}

.status-table tbody td {
    height: 62px;
    border: solid #b4b8c4;
    border-width: 2px 0;
    background: #82e0aa;
}

.status-table tbody td:first-child {
    border-left-width: 2px;
    background: #fff;
}

.status-table tbody td:last-child {
    padding-bottom: 7px;
    border-right-width: 2px;
}

.status {
    display: flex;
    align-items: center;
    justify-content: space-between;
    padding: 0 1px 7px 0;
}

.dropdown {
    position: relative;
}

.dropdown-menu {
    position: absolute;
    top: 100%;
    left: 0;
    z-index: 1;
    width: 175px;
    padding: 14px 14px 6px;
    border-radius: 4px;
    background: #fff;
    box-shadow: 0 2px 6px rgba(0, 0, 0, 0.4);
}

.dropdown-menu button {
    gap: 7px;
    min-height: 29px;
    line-height: 14px;
    text-align: left;
    white-space: normal;
}

.dropdown-menu button + button {
    margin-top: 13px;
}

.dropdown-menu svg {
    width: 15px;
    height: 15px;
}

/* Bottom of the page */
.action-bar {
    height: 60px;
    padding: 6px 16px;
    border-top: 1px solid #386bb5;
    border-bottom: 2px solid #999;
    background: #fff;
}

.back {
    gap: 7px;
    height: 46px;
    padding: 0 14px;
    border: 1px solid #386bb5;
    border-radius: 4px;
    background: #ccd5e9;
    color: #386bb5;
    font-size: 22px;
}

.back svg {
    width: 18px;
    height: 18px;
}

.footer {
    display: grid;
    grid-template-columns: 1fr auto 1fr;
    align-items: center;
    height: 35px;
    padding: 0 16px 2px;
    background: #fff;
    font-size: 16px;
    font-weight: 400;
}

.footer p {
    margin: 0;
}

.ew-logo {
    display: flex;
    align-items: center;
    color: #47196f;
    font-family: "Open Sans", sans-serif;
    font-size: 26px;
    font-weight: 700;
    line-height: 33px;
}

.ew-logo svg {
    width: 20px;
    height: 20px;
}

.link-hint {
    position: absolute;
    bottom: 0;
    left: 0;
    height: 22px;
    padding: 0 16px 0 5px;
    border-radius: 0 4px 0 0;
    background: rgba(223, 224, 234, 0.7);
    color: #606168;
    font-size: 11px;
    line-height: 22px;
}

/* Taskbar */
.taskbar {
    display: grid;
    grid-template-columns: 1fr auto 1fr;
    align-items: center;
    height: 48px;
    padding: 0 19px 0 21px;
    border-top: 1px solid #b9c0d2;
    background: linear-gradient(90deg, #e3eef7 0, #e0ecf7 18%, #d2e0fa 27%, #d6daf5 34%, #d2dff6 50%, #dbe5f6 65%, #e3ecf7 80%);
    line-height: 16px;
}

.weather {
    display: flex;
    align-items: center;
    gap: 4px;
    color: #111;
}

.weather svg {
    width: 26px;
    height: 34px;
}

.weather span {
    color: #555;
}

.task-icons {
    display: flex;
    align-items: center;
    gap: 6px;
    padding-left: 5px;
}

.start svg,
.task > svg {
    width: 24px;
    height: 24px;
}

.task-search {
    display: flex;
    align-items: center;
    gap: 11px;
    width: 218px;
    height: 31px;
    margin-left: 6px;
    padding: 0 6px 0 11px;
    border: 1px solid #c6cee2;
    border-radius: 16px;
    background: #f4f6fd;
}

.task-search input {
    flex: 1;
    min-width: 0;
    padding: 0;
    border: none;
    outline: none;
    background: none;
    font-size: 13px;
}

.task-search input::placeholder {
    color: #555;
}

.task-search .blossom {
    width: 42px;
    height: 26px;
}

.task {
    position: relative;
    justify-content: center;
    width: 38px;
    height: 38px;
    border-radius: 4px;
}

.running::after {
    content: "";
    position: absolute;
    bottom: 0;
    width: 6px;
    height: 3px;
    border-radius: 2px;
    background: #858a97;
}

.current {
    background: #f0f3fc;
}

.current::after {
    width: 16px;
    background: #0a6fcb;
}

.badge {
    position: absolute;
    top: 2px;
    right: 2px;
    display: grid;
    place-items: center;
    width: 16px;
    height: 16px;
    border-radius: 50%;
    background: #a844b8;
    color: #fff;
    font-size: 10px;
}

.mail {
    background: #4cc2f7;
}

.mail svg {
    width: 10px;
    height: 8px;
}

.tray {
    display: flex;
    align-items: center;
    justify-self: end;
    gap: 16px;
}

.system {
    display: flex;
    gap: 8px;
}

.tray-clock {
    color: #222;
    text-align: right;
}
```
